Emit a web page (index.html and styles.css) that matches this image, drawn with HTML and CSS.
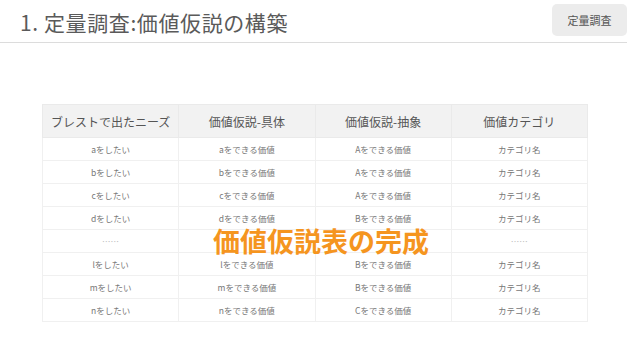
FILE: index.html
```html
<!DOCTYPE html>
<html lang="ja">
<head>
<meta charset="utf-8">
<link rel="stylesheet" href="styles.css">
</head>
<body>
<header class="top">
  <h1 class="title">1. 定量調査:価値仮説の構築</h1>
  <span class="tag">定量調査</span>
</header>
<main class="content">
  <table class="grid">
    <thead>
      <tr><th>ブレストで出たニーズ</th><th>価値仮説-具体</th><th>価値仮説-抽象</th><th>価値カテゴリ</th></tr>
    </thead>
    <tbody>
      <tr><td>aをしたい</td><td>aをできる価値</td><td>Aをできる価値</td><td>カテゴリ名</td></tr>
      <tr><td>bをしたい</td><td>bをできる価値</td><td>Aをできる価値</td><td>カテゴリ名</td></tr>
      <tr><td>cをしたい</td><td>cをできる価値</td><td>Aをできる価値</td><td>カテゴリ名</td></tr>
      <tr><td>dをしたい</td><td>dをできる価値</td><td>Bをできる価値</td><td>カテゴリ名</td></tr>
      <tr class="dots"><td>……</td><td></td><td></td><td>……</td></tr>
      <tr><td>lをしたい</td><td>lをできる価値</td><td>Bをできる価値</td><td>カテゴリ名</td></tr>
      <tr><td>mをしたい</td><td>mをできる価値</td><td>Bをできる価値</td><td>カテゴリ名</td></tr>
      <tr><td>nをしたい</td><td>nをできる価値</td><td>Cをできる価値</td><td>カテゴリ名</td></tr>
    </tbody>
  </table>
  <div class="stamp">価値仮説表の完成</div>
</main>
</body>
</html>
```

FILE: styles.css
```css
html, body {
  margin: 0;
  padding: 0;
  background: #fff;
  font-family: "Noto Sans CJK JP", "Noto Sans", sans-serif;
}
.top {
  display: flex;
  justify-content: space-between;
  align-items: flex-start;
  margin-right: 8px;
  padding: 4px 0 0 20px;
  height: 38px;
  border-bottom: 1px solid #dcdcdc;
}
.title {
  margin: 5px 0 0;
  font-size: 21px;
  line-height: 26px;
  font-weight: 400;
  color: #5a5a5a;
  letter-spacing: 0.6px;
}
.tag {
  width: 75px;
  height: 32px;
  border-radius: 5px;
  background: #ececec;
  color: #555;
  font-size: 11px;
  line-height: 32px;
  text-align: center;
}
.content {
  position: relative;
  padding: 61px 0 0 42px;
}
.grid {
  border-collapse: collapse;
  width: 546px;
  table-layout: fixed;
}
.grid th {
  background: #f2f2f2;
  color: #555;
  font-weight: 400;
  font-size: 12px;
  height: 32px;
  padding: 0;
  border: 1px solid #eaeaea;
}
.grid td {
  height: 22px;
  padding: 0;
  text-align: center;
  font-size: 8.5px;
  color: #777;
  border: 1px solid #f0f0f0;
}
.grid .dots td {
  color: #bbb;
}
.stamp {
  position: absolute;
  left: 213px;
  top: 184px;
  font-size: 27px;
  font-weight: 700;
  color: #f5951f;
  line-height: 1;
}
```
